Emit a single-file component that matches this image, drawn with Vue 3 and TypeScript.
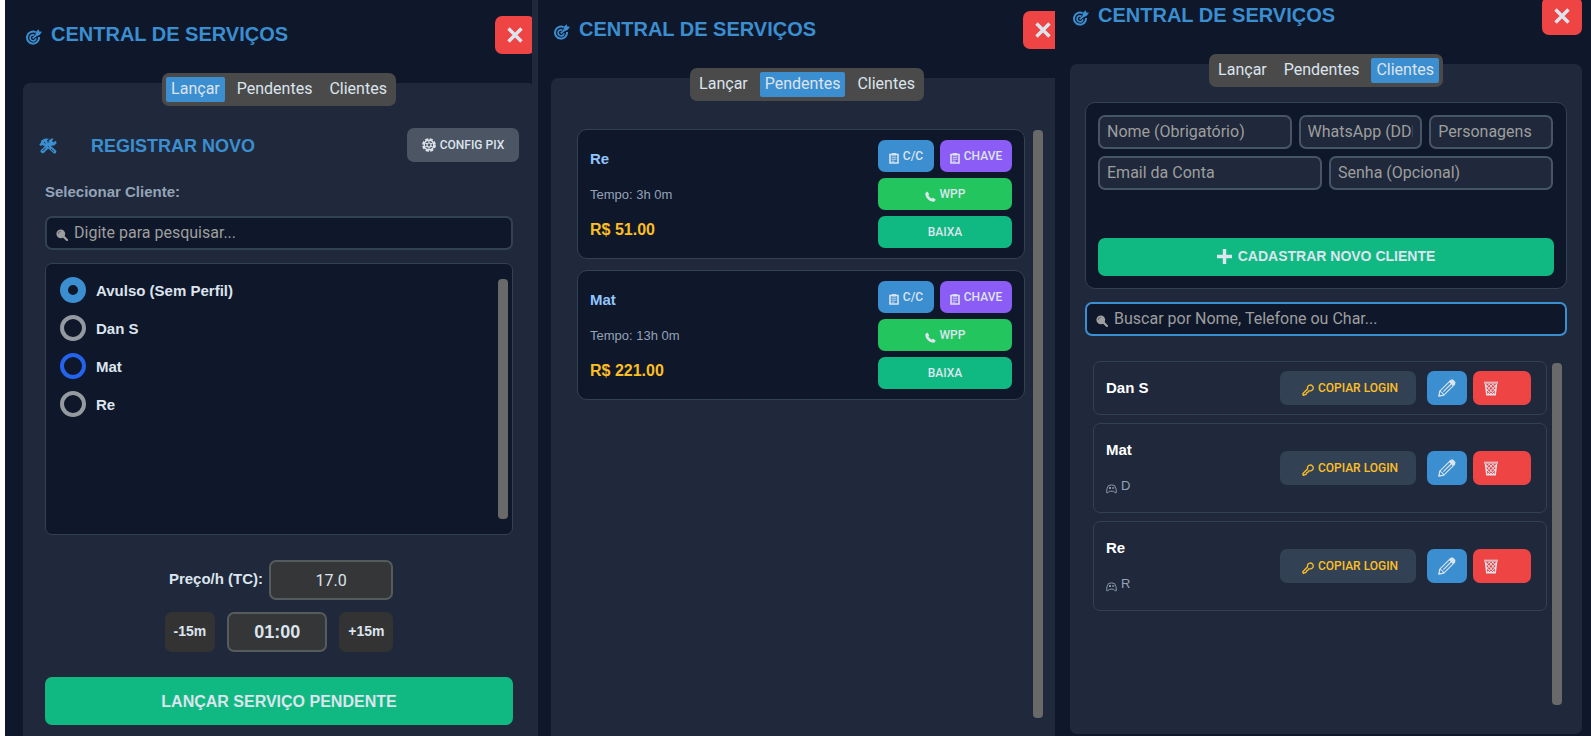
<script setup lang="ts">
import { ref } from 'vue'

type Tab = 'Lançar' | 'Pendentes' | 'Clientes'

interface Pending {
  id: number
  name: string
  time: string
  price: string
}

interface Client {
  id: number
  name: string
  character?: string
}

const tabs: Tab[] = ['Lançar', 'Pendentes', 'Clientes']

const views: { tab: Tab; mod: string }[] = [
  { tab: 'Lançar', mod: 'panel-launch' },
  { tab: 'Pendentes', mod: 'panel-pending' },
  { tab: 'Clientes', mod: 'panel-clients' },
]

const options = ['Avulso (Sem Perfil)', 'Dan S', 'Mat', 'Re']
const highlighted = 'Mat'
const selected = ref(options[0])
const price = ref('17.0')
const duration = ref('01:00')

const pending: Pending[] = [
  { id: 1, name: 'Re', time: '3h 0m', price: 'R$ 51.00' },
  { id: 2, name: 'Mat', time: '13h 0m', price: 'R$ 221.00' },
]

const clients: Client[] = [
  { id: 1, name: 'Dan S' },
  { id: 2, name: 'Mat', character: 'D' },
  { id: 3, name: 'Re', character: 'R' },
]

function shift(minutes: number) {
  const [h, m] = duration.value.split(':').map(Number)
  const total = Math.max(0, h * 60 + m + minutes)
  const pad = (n: number) => String(n).padStart(2, '0')
  duration.value = `${pad(Math.floor(total / 60))}:${pad(total % 60)}`
}
</script>

<template>
  <main class="board">
    <section v-for="view in views" :key="view.tab" class="panel" :class="view.mod">
      <div class="sheet">
        <header class="top">
          <svg class="target" viewBox="0 0 16 16" aria-hidden="true">
            <g fill="none" stroke="currentColor">
              <path d="M9.6 3.2A6 6 0 1 0 13 8" stroke-width="2" />
              <path d="M8.4 6.2A3 3 0 1 0 10 9.4" stroke-width="1.7" />
              <path d="M6.6 9.4L12 5" stroke-width="1.8" />
            </g>
            <path d="M9.4 6.400L9.800 3 12.600.2l.8 2.400 2.600.2-2.400 3.200-2.800 1z" fill="currentColor" />
          </svg>
          <h1>CENTRAL DE SERVIÇOS</h1>
          <button class="close" type="button" aria-label="Fechar">
            <svg viewBox="0 0 16 16" aria-hidden="true">
              <path d="M1.5 1.5l13 13M14.5 1.5l-13 13" stroke="currentColor" stroke-width="3.4" />
            </svg>
          </button>
        </header>

        <nav class="tabs">
          <button
            v-for="tab in tabs"
            :key="tab"
            type="button"
            :class="{ active: tab === view.tab }"
          >{{ tab }}</button>
        </nav>

        <form v-if="view.tab === 'Lançar'" class="frame launch" @submit.prevent>
          <div class="heading">
            <svg class="tools" viewBox="0 0 18 16" aria-hidden="true">
              <g fill="none" stroke="currentColor" stroke-linecap="round">
                <path d="M6.5 5.5l9 8.200" stroke-width="3.6" />
                <path d="M3.600 13.200l8-7.700" stroke-width="4" />
              </g>
              <path d="M.2 6.200L2 4.800 2.200 2.600 6 .4l4 .4-2 1.800 1 2.200L5.400 8.400 3.800 7 1.800 8z" fill="currentColor" />
              <path d="M9.400 6l.4-3.400L12.400.6l2.200.2-1.600 2.200 1.400 1.300 2.600-1.500.6 2.400-2.400 2.200-3.600.4z" fill="currentColor" />
              <path d="M3.400 13l3.200-3.200M5 4.200l1.400 1.200" stroke="#1f293b" stroke-width="1" />
              <path d="M12 11l3 2.600M9 8.200l1 1" stroke="#1f293b" stroke-width="0.9" />
            </svg>
            <h2>REGISTRAR NOVO</h2>
            <button class="config small" type="button">
              <svg viewBox="0 0 14 14" aria-hidden="true">
                <circle cx="7" cy="7" r="6" fill="none" stroke="currentColor" stroke-width="1.8" stroke-dasharray="3.2 1.512" />
                <circle cx="7" cy="7" r="4.8" fill="none" stroke="currentColor" stroke-width="1.5" />
                <circle cx="7" cy="7" r="2" fill="none" stroke="currentColor" stroke-width="1.1" />
                <path d="M7 2.800V5M7 9v2.200M3.400 4.900l1.900 1.100M8.700 8l1.900 1.100M10.600 4.900L8.700 6M5.300 8L3.400 9.100" stroke="currentColor" stroke-width="1.1" />
              </svg>
              CONFIG PIX
            </button>
          </div>

          <label class="pick" for="client-filter">Selecionar Cliente:</label>
          <div class="search">
            <svg class="lens" viewBox="0 0 12 12" aria-hidden="true">
              <circle cx="4.8" cy="4.8" r="4.4" fill="currentColor" />
              <path d="M2.4 5A2.4 2.4 0 0 1 4.8 2.400" fill="none" stroke="#5a606b" stroke-width="0.9" />
              <path d="M7.6 7.600l3.400 3.400" stroke="currentColor" stroke-width="2.2" stroke-linecap="round" />
            </svg>
            <input id="client-filter" type="text" placeholder="Digite para pesquisar..." />
          </div>

          <div class="choices">
            <div class="choice-list">
              <label v-for="option in options" :key="option" :class="{ hover: option === highlighted }">
                <input v-model="selected" type="radio" name="client" :value="option" />
                <span>{{ option }}</span>
              </label>
            </div>
            <div class="bar"></div>
          </div>

          <div class="rate">
            <label for="rate">Preço/h (TC):</label>
            <input id="rate" v-model="price" class="dark-input" type="text" />
          </div>
          <div class="time">
            <button class="step" type="button" @click="shift(-15)">-15m</button>
            <input v-model="duration" class="dark-input clock" type="text" aria-label="Duração" />
            <button class="step" type="button" @click="shift(15)">+15m</button>
          </div>
          <button class="submit" type="submit">LANÇAR SERVIÇO PENDENTE</button>
        </form>

        <div v-else-if="view.tab === 'Pendentes'" class="frame pending">
          <div class="cards">
            <article v-for="item in pending" :key="item.id" class="job">
              <div class="job-info">
                <h3>{{ item.name }}</h3>
                <p class="spent">Tempo: {{ item.time }}</p>
                <p class="price">{{ item.price }}</p>
              </div>
              <div class="job-actions">
                <button v-for="kind in ['C/C', 'CHAVE']" :key="kind" class="small" :class="kind === 'C/C' ? 'blue' : 'violet'" type="button">
                  <svg class="clip" viewBox="0 0 10 11" aria-hidden="true">
                    <path d="M1 1.500h8v8.500H1z" fill="none" stroke="currentColor" stroke-width="1.6" />
                    <path d="M3 .4h4v1.600H3zM2.600 4.200h4.800M2.600 6.200h4.800M2.600 8.200h3" fill="currentColor" stroke="currentColor" stroke-width="0.9" />
                  </svg>
                  {{ kind }}
                </button>
                <button class="small green wide" type="button">
                  <svg class="phone" viewBox="0 0 11 11" aria-hidden="true">
                    <path d="M.3 2.200L2.200.4 4.200 3 3.400 4.600C4.200 5.800 5.200 6.800 6.400 7.600L8.200 6.800l2.600 2L9.200 10.700C4.400 11 .1 6.600.3 2.200z" fill="currentColor" />
                  </svg>
                  WPP
                </button>
                <button class="small emerald wide" type="button">BAIXA</button>
              </div>
            </article>
          </div>
          <div class="bar"></div>
        </div>

        <div v-else class="frame clients">
          <form class="register" @submit.prevent>
            <div class="fields three">
              <input type="text" placeholder="Nome (Obrigatório)" aria-label="Nome" />
              <input type="text" placeholder="WhatsApp (DDD)" aria-label="WhatsApp" />
              <input type="text" placeholder="Personagens" aria-label="Personagens" />
            </div>
            <div class="fields two">
              <input type="text" placeholder="Email da Conta" aria-label="Email da Conta" />
              <input type="text" placeholder="Senha (Opcional)" aria-label="Senha" />
            </div>
            <button class="add" type="submit">
              <svg viewBox="0 0 15 15" aria-hidden="true">
                <path d="M7.5 0v15M0 7.5h15" stroke="currentColor" stroke-width="3.4" />
              </svg>
              CADASTRAR NOVO CLIENTE
            </button>
          </form>

          <div class="search focused">
            <svg class="lens" viewBox="0 0 12 12" aria-hidden="true">
              <circle cx="4.8" cy="4.8" r="4.4" fill="currentColor" />
              <path d="M2.4 5A2.4 2.4 0 0 1 4.8 2.400" fill="none" stroke="#5a606b" stroke-width="0.9" />
              <path d="M7.6 7.600l3.400 3.400" stroke="currentColor" stroke-width="2.2" stroke-linecap="round" />
            </svg>
            <input type="text" placeholder="Buscar por Nome, Telefone ou Char..." aria-label="Buscar cliente" />
          </div>

          <div class="client-area">
            <ul class="client-list">
              <li v-for="client in clients" :key="client.id">
                <div class="who">
                  <h3>{{ client.name }}</h3>
                  <p v-if="client.character">
                    <svg class="gamepad" viewBox="0 0 11 10" aria-hidden="true">
                      <g fill="none" stroke="currentColor" stroke-width="0.9">
                        <path d="M2.4 1.600Q5.500.2 8.600 1.600 10.600 4.600 10.400 8.600 9.200 9.800 7.600 7.200H3.400Q1.800 9.800.6 8.600.4 4.600 2.400 1.600z" />
                        <path d="M3 3l2 2M5 3L3 5M6.400 3.200l1.600 1.600M8 3.200L6.400 4.800" />
                      </g>
                    </svg>
                    {{ client.character }}
                  </p>
                </div>
                <button class="small copy" type="button">
                  <svg class="key" viewBox="0 0 12 12" aria-hidden="true">
                    <path d="M5.600 4.800A2.900 2.900 0 1 1 8 6.800L6.400 7 5.800 8.400 4.600 8.800 4 10.400 1.200 11.400.8 9.800z" fill="none" stroke="currentColor" stroke-width="1.3" stroke-linejoin="round" />
                  </svg>
                  COPIAR LOGIN
                </button>
                <button class="edit" type="button" aria-label="Editar">
                  <svg viewBox="0 0 18 18" aria-hidden="true">
                    <g fill="none" stroke="currentColor" stroke-width="1.2" stroke-linejoin="round">
                      <path d="M.8 17.200l1-5L12.600 1.400l4 4L5.800 16.200z" />
                      <path d="M1.800 12.200q3 1 4 4M5.400 12.600L14 4" />
                    </g>
                    <path d="M.8 17.200l.5-2.200 1.700 1.700zM11 3L13.400.6h1.600L17.400 3v1.600L15 7z" fill="currentColor" />
                  </svg>
                </button>
                <button class="remove" type="button" aria-label="Excluir">
                  <svg viewBox="0 0 14 15" aria-hidden="true">
                    <g fill="none" stroke="currentColor">
                      <path d="M0 1.700h14" stroke-width="2.2" opacity="0.700" />
                      <path d="M1.500 3l1.300 10.800h8.400L12.500 3" stroke-width="1.5" />
                      <path d="M2 4l8 9M5 3l6.600 7.200M8.600 3l3.400 3.800M2.400 8l5 5.600M12 4l-8 9M9 3L2.400 10.200M5.400 3L2 6.800M11.600 8l-5 5.600" stroke-width="1" />
                    </g>
                  </svg>
                </button>
              </li>
            </ul>
            <div class="bar"></div>
          </div>
        </div>
      </div>
    </section>
  </main>
</template>

<style>
body {
  background: #ffffff;
}
</style>

<style scoped>
.board,
.board * {
  box-sizing: border-box;
}

.board {
  display: grid;
  grid-template-columns: 533fr 517fr 536fr;
  min-height: 100vh;
  padding-left: 5px;
  color: #dce4ee;
  font-family: 'Liberation Sans', Arial, sans-serif;
}

h1,
h2,
h3,
p,
ul {
  margin: 0;
  padding: 0;
}

button,
input {
  margin: 0;
  border: 0;
  color: inherit;
  font-family: inherit;
}

button {
  display: flex;
  align-items: center;
  justify-content: center;
  padding: 0;
  cursor: pointer;
}

svg {
  flex: none;
  display: block;
}

.panel {
  display: flex;
  min-width: 0;
  overflow: hidden;
  background: #0f172a;
}

.sheet {
  display: flex;
  flex: 1;
  flex-direction: column;
  min-width: 0;
}

.panel-launch {
  padding: 16px 0 0 18px;
  border-right: 6px solid #1f293b;
}

.panel-launch .sheet {
  margin-right: -3px;
}

.panel-pending {
  padding: 11px 0 0 13px;
}

.panel-pending .sheet {
  margin-right: -8px;
}

.panel-clients {
  padding: 0 9px 2px 15px;
}

.panel-clients .sheet {
  margin-top: -3px;
}

.top {
  display: flex;
  align-items: center;
  height: 38px;
  padding-left: 3px;
  color: #3b8ed0;
}

.target {
  width: 16px;
  height: 16px;
  margin: 4px 9px 0 0;
}

h1 {
  flex: 1;
  padding-bottom: 2px;
  font-size: 20px;
  line-height: 24px;
  white-space: nowrap;
}

.close {
  width: 40px;
  height: 38px;
  border-radius: 7px;
  background: #ef4444;
  color: #dce4ee;
}

.close svg {
  width: 16px;
  height: 16px;
}

.tabs {
  z-index: 1;
  display: flex;
  align-self: center;
  gap: 7px;
  height: 33px;
  margin-top: 19px;
  padding: 4px;
  border-radius: 7px;
  background: #4a4a4a;
}

.tabs button {
  padding: 0 5px 2px;
  border-radius: 2px;
  background: transparent;
  font: 16px/20px Roboto, sans-serif;
}

.tabs .active {
  background: #3b8ed0;
}

.frame {
  display: flex;
  flex: 1;
  margin-top: -23px;
  border-radius: 7px 7px 0 0;
  background: #1f293b;
}

.small {
  gap: 4px;
  border-radius: 7px;
  font: 500 12px/16px Roboto, sans-serif;
  white-space: nowrap;
}

.bar {
  flex: none;
  width: 10px;
  border-radius: 4px;
  background: #696969;
}

/* Lançar */
.launch {
  flex-direction: column;
  padding: 45px 22px 11px;
}

.heading {
  display: flex;
  align-items: center;
  height: 34px;
  margin: 0 -6px;
  color: #3b8ed0;
}

.tools {
  width: 18px;
  height: 16px;
  margin: 2px 34px 0 0;
}

h2 {
  flex: 1;
  padding-top: 2px;
  font-size: 18px;
  line-height: 24px;
}

.config {
  width: 112px;
  height: 34px;
  background: #4b5563;
  color: #dce4ee;
}

.config svg {
  width: 14px;
  height: 14px;
}

.pick {
  margin: 20px 0 14px;
  color: #94a3b8;
  font-size: 15px;
  font-weight: 700;
  line-height: 20px;
}

.search {
  display: flex;
  align-items: center;
  gap: 6px;
  height: 34px;
  padding: 0 9px;
  border: 2px solid #334155;
  border-radius: 7px;
  background: #0f172a;
}

.lens {
  width: 12px;
  height: 12px;
  margin-top: 4px;
  color: #9e9e9e;
}

.search input {
  flex: 1;
  min-width: 0;
  padding: 0;
  background: transparent;
  font: 16px/20px Roboto, sans-serif;
  outline: 0;
}

input::placeholder {
  color: #9e9e9e;
  opacity: 1;
}

.choices {
  display: flex;
  flex: 1;
  margin-top: 13px;
  padding: 15px 4px 15px 14px;
  border: 1px solid #334155;
  border-radius: 7px;
  background: #0f172a;
}

.choice-list {
  display: flex;
  flex: 1;
  flex-direction: column;
  gap: 12px;
  margin-top: -2px;
}

.choice-list label {
  display: flex;
  align-items: center;
  gap: 10px;
  font-size: 15px;
  font-weight: 700;
  line-height: 20px;
}

.choice-list span {
  padding-top: 2px;
}

.choice-list input {
  width: 26px;
  height: 26px;
  border: 4px solid #949a9f;
  border-radius: 50%;
  appearance: none;
}

.choice-list .hover input {
  border-color: #2463eb;
}

.choice-list input:checked {
  border: 8px solid #3b8ed0;
}

.rate,
.time {
  display: flex;
  align-items: center;
  justify-content: center;
}

.rate {
  gap: 6px;
  margin-top: 25px;
  padding-left: 4px;
  font-size: 15px;
  font-weight: 700;
}

.rate label {
  padding-bottom: 3px;
}

.dark-input {
  width: 124px;
  height: 40px;
  border: 2px solid #565b5e;
  border-radius: 7px;
  background: #343638;
  font: 16px/20px Roboto, sans-serif;
  text-align: center;
}

.time {
  gap: 12px;
  margin-top: 12px;
}

.time .clock {
  width: 100px;
  font: 700 18px/22px 'Liberation Sans', Arial, sans-serif;
}

.step {
  height: 40px;
  padding: 0 9px 2px;
  border-radius: 7px;
  background: #333333;
  font-size: 14px;
  font-weight: 700;
}

.submit {
  height: 48px;
  margin-top: 25px;
  padding-top: 2px;
  border-radius: 7px;
  background: #10b981;
  font-size: 16px;
  font-weight: 700;
}

/* Pendentes */
.pending {
  gap: 8px;
  padding: 51px 20px 18px 26px;
}

.cards {
  display: flex;
  flex: 1;
  flex-direction: column;
  gap: 11px;
}

.pending .bar {
  margin-top: 1px;
}

.job {
  display: flex;
  justify-content: space-between;
  padding: 10px 12px;
  border: 1px solid #334155;
  border-radius: 10px;
  background: #0f172a;
}

.job h3 {
  margin-top: 9px;
  color: #93c5fd;
  font-size: 15px;
  line-height: 20px;
}

.spent {
  margin-top: 16px;
  color: #94a3b8;
  font-size: 13px;
  line-height: 20px;
}

.price {
  margin-top: 15px;
  color: #fbbf24;
  font-size: 16px;
  font-weight: 700;
  line-height: 20px;
}

.job-actions {
  display: grid;
  grid-template-columns: 56px 72px;
  grid-auto-rows: 32px;
  gap: 6px;
}

.wide {
  grid-column: span 2;
}

.blue {
  background: #3b8ed0;
}

.violet {
  background: #8b5cf6;
}

.green {
  background: #22c55e;
}

.emerald {
  background: #10b981;
}

.clip {
  width: 10px;
  height: 11px;
  margin-top: 5px;
}

.phone {
  width: 11px;
  height: 11px;
  margin-top: 4px;
}

/* Clientes */
.clients {
  flex-direction: column;
  padding: 38px 15px 29px;
  border-radius: 7px;
}

.register {
  padding: 12px;
  border: 1px solid #334155;
  border-radius: 10px;
  background: #0f172a;
}

.fields {
  display: grid;
  gap: 7px;
  margin: 0 1px 7px 0;
}

.three {
  grid-template-columns: 194fr 124fr 124fr;
}

.two {
  grid-template-columns: 1fr 1fr;
}

.fields input {
  width: 100%;
  min-width: 0;
  height: 34px;
  padding: 0 7px 2px;
  border: 2px solid #475569;
  border-radius: 7px;
  background: #1f293b;
  font: 16px/20px Roboto, sans-serif;
}

.add {
  gap: 6px;
  width: 100%;
  height: 38px;
  margin-top: 48px;
  padding-bottom: 2px;
  border-radius: 7px;
  background: #10b981;
  font-size: 14px;
  font-weight: 700;
}

.add svg {
  width: 15px;
  height: 15px;
}

.clients .search {
  margin-top: 13px;
}

.focused {
  border-color: #3b8ed0;
}

.client-area {
  display: flex;
  flex: 1;
  gap: 5px;
  margin-top: 25px;
  padding: 0 5px 0 8px;
}

.client-area .bar {
  margin-top: 2px;
}

.client-list {
  display: flex;
  flex: 1;
  flex-direction: column;
  gap: 8px;
  list-style: none;
}

.client-list li {
  display: flex;
  align-items: center;
  min-height: 54px;
  padding: 9px 15px 9px 12px;
  border: 1px solid #334155;
  border-radius: 7px;
}

.who {
  flex: 1;
  min-width: 0;
}

.who h3 {
  color: #ffffff;
  font-size: 15px;
  line-height: 20px;
}

.who p {
  display: flex;
  align-items: center;
  gap: 4px;
  margin: 16px 0 7px;
  color: #94a3b8;
  font-size: 13px;
  line-height: 20px;
}

.who h3:not(:last-child) {
  margin-top: 7px;
}

.gamepad {
  width: 11px;
  height: 10px;
  margin-top: 5px;
}

.copy {
  width: 136px;
  height: 34px;
  margin-right: 11px;
  padding-left: 4px;
  background: #334155;
  color: #fbbf24;
}

.key {
  width: 12px;
  height: 12px;
  margin-top: 4px;
}

.edit,
.remove {
  height: 34px;
  border-radius: 7px;
}

.edit {
  width: 40px;
  margin-right: 6px;
  background: #3b8ed0;
}

.edit svg {
  width: 18px;
  height: 18px;
}

.remove {
  justify-content: flex-start;
  width: 58px;
  padding-left: 11px;
  background: #ef4444;
}

.remove svg {
  width: 14px;
  height: 15px;
}
</style>
